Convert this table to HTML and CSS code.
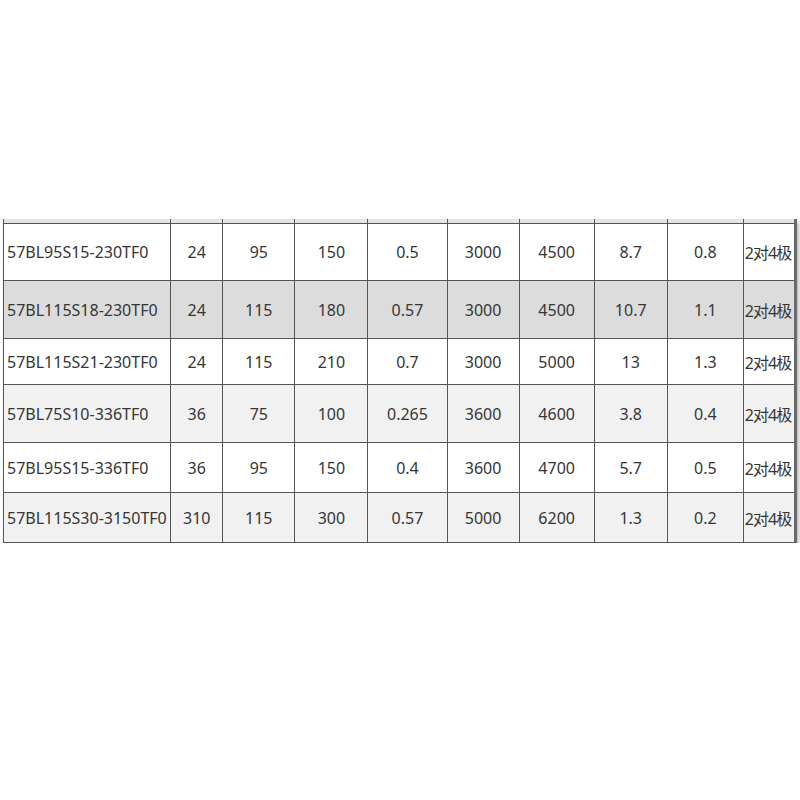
FILE: index.html
```html
<!DOCTYPE html>
<html lang="zh">
<head>
<meta charset="utf-8">
<link rel="stylesheet" href="styles.css">
</head>
<body>
<div class="page">
  <table class="spec">
    <colgroup>
      <col class="c-model"><col class="c1"><col class="c2"><col class="c3"><col class="c4"><col class="c5"><col class="c6"><col class="c7"><col class="c8"><col class="c9">
    </colgroup>
    <tbody>
      <tr class="cut"><td></td><td></td><td></td><td></td><td></td><td></td><td></td><td></td><td></td><td></td></tr>
      <tr class="r h57"><td class="m">57BL95S15-230TF0</td><td>24</td><td>95</td><td>150</td><td>0.5</td><td>3000</td><td>4500</td><td>8.7</td><td>0.8</td><td class="p">2对4极</td></tr>
      <tr class="r h58 dark"><td class="m">57BL115S18-230TF0</td><td>24</td><td>115</td><td>180</td><td>0.57</td><td>3000</td><td>4500</td><td>10.7</td><td>1.1</td><td class="p">2对4极</td></tr>
      <tr class="r h46"><td class="m">57BL115S21-230TF0</td><td>24</td><td>115</td><td>210</td><td>0.7</td><td>3000</td><td>5000</td><td>13</td><td>1.3</td><td class="p">2对4极</td></tr>
      <tr class="r h58 light"><td class="m">57BL75S10-336TF0</td><td>36</td><td>75</td><td>100</td><td>0.265</td><td>3600</td><td>4600</td><td>3.8</td><td>0.4</td><td class="p">2对4极</td></tr>
      <tr class="r h50"><td class="m">57BL95S15-336TF0</td><td>36</td><td>95</td><td>150</td><td>0.4</td><td>3600</td><td>4700</td><td>5.7</td><td>0.5</td><td class="p">2对4极</td></tr>
      <tr class="r h50 light"><td class="m">57BL115S30-3150TF0</td><td>310</td><td>115</td><td>300</td><td>0.57</td><td>5000</td><td>6200</td><td>1.3</td><td>0.2</td><td class="p">2对4极</td></tr>
    </tbody>
  </table>
</div>
</body>
</html>
```
FILE: styles.css
```css
html, body {
  margin: 0;
  padding: 0;
  background: #ffffff;
}
.page {
  padding: 219px 0 0 3px;
  width: 797px;
  box-sizing: border-box;
}
.spec {
  border-collapse: collapse;
  table-layout: fixed;
  width: 794px;
  font-family: "Noto Sans", "Noto Sans CJK SC", sans-serif;
  font-size: 16px;
  color: #363636;
  box-shadow: 2px 3px 4px rgba(0, 0, 0, 0.28);
  border-right: 3px solid #6a6a6a;
}
.c-model { width: 167px; }
.c1 { width: 52px; }
.c2 { width: 72px; }
.c3 { width: 73px; }
.c4 { width: 79px; }
.c5 { width: 72px; }
.c6 { width: 75px; }
.c7 { width: 73px; }
.c8 { width: 76px; }
.c9 { width: 52px; }
.spec td {
  border: 1px solid #555555;
  text-align: center;
  padding: 0;
  white-space: nowrap;
  overflow: hidden;
  vertical-align: middle;
}
.spec tr.cut td {
  border-top: none;
  height: 4px;
  background: #e4e4e4;
}
.spec td.m {
  text-align: left;
  padding-left: 3px;
}
.spec td.p {
  text-align: left;
  padding-left: 1px;
  letter-spacing: -1px;
}
.r { background: #ffffff; }
.r.dark { background: #dcdcdc; }
.r.light { background: #f1f1f1; }
.h57 td { height: 56px; }
.h58 td { height: 57px; }
.h46 td { height: 45px; }
.h50 td { height: 49px; }
```
